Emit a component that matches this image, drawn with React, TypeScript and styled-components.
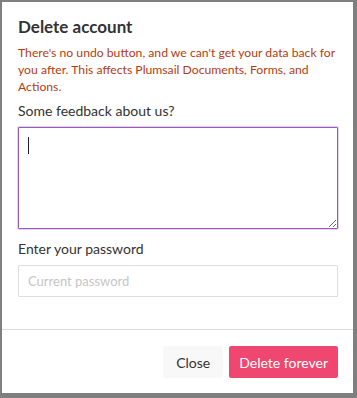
import React from "react";
import styled, { createGlobalStyle } from "styled-components";

const Global = createGlobalStyle`
  html, body { margin: 0; padding: 0; background: #7f7f7f; }
  body { font-family: Lato, "Open Sans", sans-serif; }
  * { box-sizing: border-box; }
`;

const Page = styled.div`
  width: 357px;
  height: 398px;
  padding: 2px 4px 5px 2px;
  display: flex;
`;

const Dialog = styled.div`
  flex: 1;
  background: #fff;
  display: flex;
  flex-direction: column;
`;

const Body = styled.div`
  padding: 14px 15px 0 16px;
  display: flex;
  flex-direction: column;
  flex: 1;
`;

const Title = styled.h2`
  margin: 0;
  font-size: 17px;
  line-height: 22px;
  font-weight: 700;
  color: #333;
`;

const Warning = styled.p`
  margin: 6px 0 0;
  font-size: 12.2px;
  line-height: 17px;
  color: #b53c10;
`;

const Label = styled.label<{ $top: number }>`
  display: block;
  margin-top: ${(p) => p.$top}px;
  font-size: 14px;
  line-height: 20px;
  color: #333;
`;

const Field = styled.div`
  position: relative;
  margin-top: 6px;
`;

const TextArea = styled.textarea`
  display: block;
  width: 100%;
  height: 102px;
  border: 1px solid #9b59b6;
  box-shadow: 0 0 0 1px #e3d3ec;
  border-radius: 1px;
  outline: none;
  padding: 6px 9px;
  font-family: inherit;
  font-size: 14px;
  color: #333;
  resize: vertical;
  caret-color: transparent;
`;

const Caret = styled.span`
  position: absolute;
  left: 10px;
  top: 10px;
  width: 1px;
  height: 17px;
  background: #222;
  pointer-events: none;
`;

const Input = styled.input`
  display: block;
  margin-top: 6px;
  width: 100%;
  height: 32px;
  border: 1px solid #dedede;
  border-radius: 1px;
  padding: 0 9px;
  font-family: inherit;
  font-size: 13px;
  color: #333;
  outline: none;
  &::placeholder { color: #c6c6c6; }
`;

const Footer = styled.div`
  border-top: 1px solid #dcdcdc;
  padding: 16px 15px 15px 16px;
  display: flex;
  justify-content: flex-end;
  gap: 6px;
`;

const Button = styled.button<{ $primary?: boolean }>`
  height: 32px;
  padding: 0 ${(p) => (p.$primary ? 10 : 13)}px;
  border: none;
  border-radius: 2px;
  font-family: inherit;
  font-size: 14px;
  background: ${(p) => (p.$primary ? "#ef476f" : "#f8f8f8")};
  color: ${(p) => (p.$primary ? "#fff" : "#333")};
  cursor: pointer;
`;

export default function App() {
  return (
    <>
      <Global />
      <Page>
        <Dialog>
          <Body>
            <Title>Delete account</Title>
            <Warning>
              There's no undo button, and we can't get your data back for you
              after. This affects Plumsail Documents, Forms, and Actions.
            </Warning>
            <Label $top={6}>Some feedback about us?</Label>
            <Field>
              <TextArea autoFocus />
              <Caret />
            </Field>
            <Label $top={10}>Enter your password</Label>
            <Input type="password" placeholder="Current password" />
          </Body>
          <Footer>
            <Button>Close</Button>
            <Button $primary>Delete forever</Button>
          </Footer>
        </Dialog>
      </Page>
    </>
  );
}
